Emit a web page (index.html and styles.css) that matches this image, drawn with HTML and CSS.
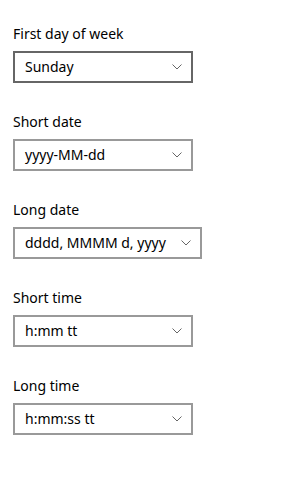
FILE: index.html
```html
<!DOCTYPE html>
<html lang="en">
<head>
    <meta charset="UTF-8">
    <title>Date and time formats</title>
    <link rel="stylesheet" href="styles.css">
</head>
<body>
    <div class="field">
        <div class="field-label">First day of week</div>
        <div class="combo combo-active">
            <span class="combo-value">Sunday</span>
            <svg class="chevron" width="10" height="6" viewBox="0 0 10 6"><path d="M0.5 0.5 L5 5 L9.5 0.5" fill="none" stroke="#666" stroke-width="1"/></svg>
        </div>
    </div>

    <div class="field">
        <div class="field-label">Short date</div>
        <div class="combo">
            <span class="combo-value">yyyy-MM-dd</span>
            <svg class="chevron" width="10" height="6" viewBox="0 0 10 6"><path d="M0.5 0.5 L5 5 L9.5 0.5" fill="none" stroke="#666" stroke-width="1"/></svg>
        </div>
    </div>

    <div class="field">
        <div class="field-label">Long date</div>
        <div class="combo">
            <span class="combo-value">dddd, MMMM d, yyyy</span>
            <svg class="chevron" width="10" height="6" viewBox="0 0 10 6"><path d="M0.5 0.5 L5 5 L9.5 0.5" fill="none" stroke="#666" stroke-width="1"/></svg>
        </div>
    </div>

    <div class="field">
        <div class="field-label">Short time</div>
        <div class="combo">
            <span class="combo-value">h:mm tt</span>
            <svg class="chevron" width="10" height="6" viewBox="0 0 10 6"><path d="M0.5 0.5 L5 5 L9.5 0.5" fill="none" stroke="#666" stroke-width="1"/></svg>
        </div>
    </div>

    <div class="field">
        <div class="field-label">Long time</div>
        <div class="combo">
            <span class="combo-value">h:mm:ss tt</span>
            <svg class="chevron" width="10" height="6" viewBox="0 0 10 6"><path d="M0.5 0.5 L5 5 L9.5 0.5" fill="none" stroke="#666" stroke-width="1"/></svg>
        </div>
    </div>
</body>
</html>
```

FILE: styles.css
```css
body {
    font-family: "Noto Sans", "Open Sans", sans-serif;
    font-size: 14px;
    color: #000;
    background: white;
    margin: 0;
    padding: 24px 13px 0 13px;
}
.field {
    margin-bottom: 29px;
}
.field-label {
    height: 20px;
    line-height: 19px;
    margin-bottom: 7px;
}
.combo {
    display: inline-flex;
    align-items: center;
    box-sizing: border-box;
    min-width: 180px;
    height: 32px;
    padding: 0 9px 1px 10px;
    border: 2px solid #999;
    background: white;
}
.combo-active {
    border-color: #666;
}
.combo-value {
    flex: 1;
    white-space: nowrap;
}
.chevron {
    margin-left: 15px;
    margin-top: 1px;
    flex-shrink: 0;
}
```
